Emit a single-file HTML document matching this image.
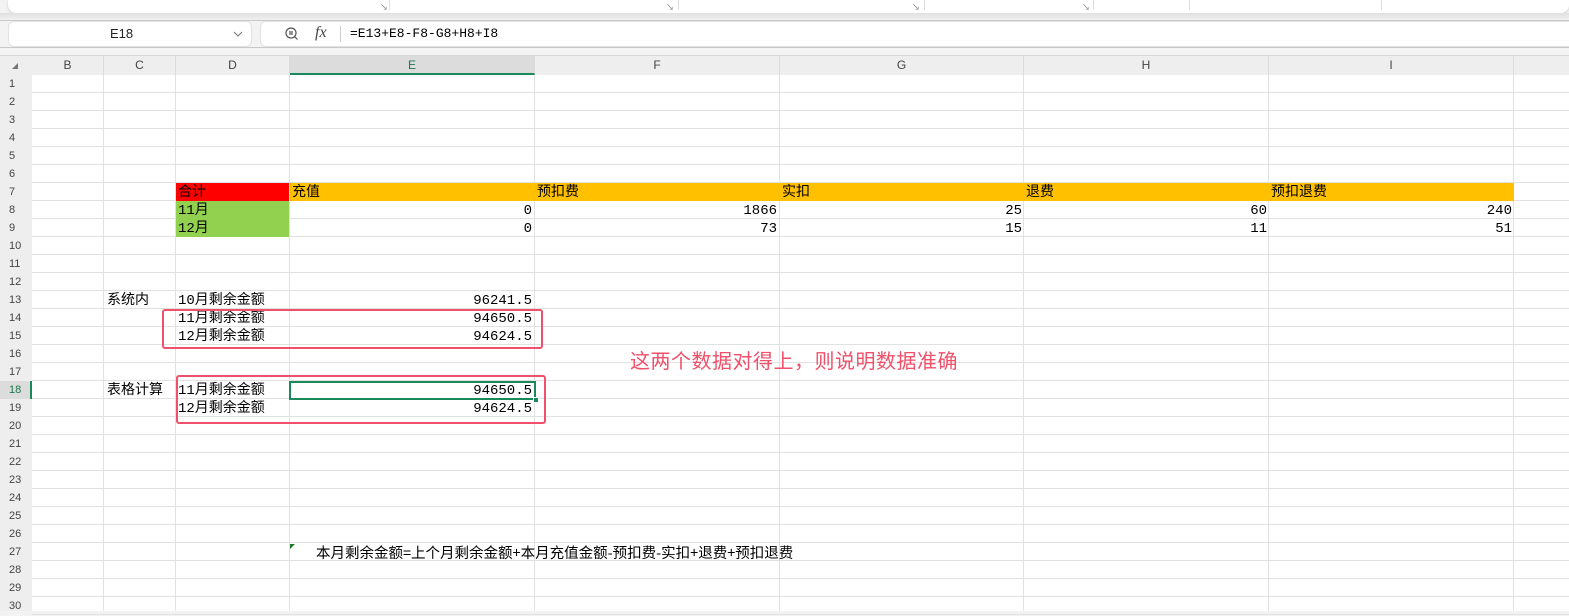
<!DOCTYPE html>
<html><head><meta charset="utf-8"><style>
*{margin:0;padding:0;box-sizing:border-box}
body{width:1569px;height:611px;overflow:hidden;background:#f3f3f3;font-family:"Liberation Sans","Noto Sans CJK SC",sans-serif;position:relative}
.a{position:absolute}
.t{font-family:"Liberation Mono","Noto Sans CJK SC",monospace;font-size:14px;color:#000;line-height:18px;white-space:nowrap}
.hl{position:absolute;left:32px;width:1537px;height:1px;background:#e1e1e1}
.vl{position:absolute;top:75px;height:536px;width:1px;background:#e1e1e1}
.ch{position:absolute;top:56px;height:19px;font-size:12px;color:#444;text-align:center;line-height:19px;border-right:1px solid #dcdcdc}
.rn{position:absolute;left:0;width:32px;height:18px;font-size:11px;color:#444;line-height:19px;padding-left:9px}
</style></head><body>
<div class="a" style="left:8px;top:0;width:1561px;height:13px;background:#fff;border-radius:0 0 8px 8px;box-shadow:0 1px 2px #ccc"></div>
<div class="a" style="left:380px;top:2px;font-size:8px;color:#777">↘</div>
<div class="a" style="left:389px;top:0;width:1px;height:10px;background:#ddd"></div>
<div class="a" style="left:666px;top:2px;font-size:8px;color:#777">↘</div>
<div class="a" style="left:678px;top:0;width:1px;height:10px;background:#ddd"></div>
<div class="a" style="left:912px;top:2px;font-size:8px;color:#777">↘</div>
<div class="a" style="left:924px;top:0;width:1px;height:10px;background:#ddd"></div>
<div class="a" style="left:1082px;top:2px;font-size:8px;color:#777">↘</div>
<div class="a" style="left:1093px;top:0;width:1px;height:10px;background:#ddd"></div>
<div class="a" style="left:1189px;top:0;width:1px;height:10px;background:#ddd"></div>
<div class="a" style="left:1381px;top:0;width:1px;height:10px;background:#ddd"></div>
<div class="a" style="left:0;top:13px;width:1569px;height:8px;background:linear-gradient(#e0e0e0,#f3f3f3)"></div>
<div class="a" style="left:0;top:20px;width:1569px;height:1px;background:#c8c8c8"></div>
<div class="a" style="left:8px;top:21px;width:244px;height:26px;background:#fff;border-radius:6px;border:1px solid #e2e2e2"></div>
<div class="a" style="left:110px;top:26px;font-size:13px;color:#222">E18</div>
<svg class="a" style="left:233px;top:30px" width="10" height="8"><path d="M1 2l4 4 4-4" stroke="#777" fill="none"/></svg>
<div class="a" style="left:260px;top:21px;width:1320px;height:26px;background:#fff;border-radius:6px;border:1px solid #e2e2e2"></div>
<svg class="a" style="left:284px;top:26px" width="16" height="16"><circle cx="7" cy="7" r="5" stroke="#555" fill="none" stroke-width="1.2"/><path d="M5 6h4M5 8h4M10.5 10.5l3 3" stroke="#555" stroke-width="1.2"/></svg>
<div class="a" style="left:315px;top:24px;font-family:'Liberation Serif',serif;font-style:italic;font-size:16px;color:#444">fx</div>
<div class="a" style="left:340px;top:26px;width:1px;height:16px;background:#ccc"></div>
<div class="a t" style="left:350px;top:25px;font-size:13px">=E13+E8-F8-G8+H8+I8</div>
<div class="a" style="left:0;top:47px;width:1569px;height:1px;background:#c8c8c8"></div>
<div class="a" style="left:0;top:48px;width:1569px;height:8px;background:#f3f3f3"></div>
<div class="a" style="left:0;top:55px;width:1569px;height:20px;background:#eeeeee;border-top:1px solid #d8d8d8"></div>
<div class="a" style="left:0;top:75px;width:32px;height:536px;background:#eeeeee"></div>
<div class="a" style="left:32px;top:75px;width:1537px;height:536px;background:#fff"></div>
<svg class="a" style="left:11px;top:62px" width="8" height="8"><path d="M7 1v6H1z" fill="#777"/></svg>
<div class="ch" style="left:32px;width:72px">B</div>
<div class="ch" style="left:104px;width:72px">C</div>
<div class="ch" style="left:176px;width:114px">D</div>
<div class="ch" style="left:290px;width:245px;background:#dcdcdc;color:#1a7a4a;border-bottom:2px solid #1a8a5a">E</div>
<div class="ch" style="left:535px;width:245px">F</div>
<div class="ch" style="left:780px;width:244px">G</div>
<div class="ch" style="left:1024px;width:245px">H</div>
<div class="ch" style="left:1269px;width:245px">I</div>
<div class="vl" style="left:103px"></div><div class="vl" style="left:175px"></div><div class="vl" style="left:289px"></div><div class="vl" style="left:534px"></div><div class="vl" style="left:779px"></div><div class="vl" style="left:1023px"></div><div class="vl" style="left:1268px"></div><div class="vl" style="left:1513px"></div>
<div id="rows"></div>
<script>
var h='';for(var i=1;i<=30;i++){var y=75+(i-1)*18;h+='<div class="hl" style="top:'+(y+17)+'px"></div><div class="rn" style="top:'+y+'px;'+(i==18?'background:#dcdcdc;color:#1a7a4a;border-right:2px solid #1a8a5a':'')+'">'+i+'</div>';}
document.getElementById('rows').innerHTML=h;
</script>
<div class="a" style="left:176px;top:183px;width:113px;height:18px;background:#ff0000"></div>
<div class="a" style="left:290px;top:183px;width:1224px;height:18px;background:#ffc000"></div>
<div class="a" style="left:176px;top:201px;width:113px;height:36px;background:#92d050"></div>
<div class="a t" style="left:178px;top:184px">合计</div>
<div class="a t" style="left:292px;top:184px">充值</div>
<div class="a t" style="left:537px;top:184px">预扣费</div>
<div class="a t" style="left:782px;top:184px">实扣</div>
<div class="a t" style="left:1026px;top:184px">退费</div>
<div class="a t" style="left:1271px;top:184px">预扣退费</div>
<div class="a t" style="left:178px;top:202px">11月</div>
<div class="a t" style="left:178px;top:220px">12月</div>
<div class="a t" style="right:1037px;top:202px">0</div><div class="a t" style="right:792px;top:202px">1866</div><div class="a t" style="right:547px;top:202px">25</div><div class="a t" style="right:302px;top:202px">60</div><div class="a t" style="right:57px;top:202px">240</div>
<div class="a t" style="right:1037px;top:220px">0</div><div class="a t" style="right:792px;top:220px">73</div><div class="a t" style="right:547px;top:220px">15</div><div class="a t" style="right:302px;top:220px">11</div><div class="a t" style="right:57px;top:220px">51</div>
<div class="a t" style="left:107px;top:292px">系统内</div>
<div class="a t" style="left:178px;top:292px">10月剩余金额</div>
<div class="a t" style="left:178px;top:310px">11月剩余金额</div>
<div class="a t" style="left:178px;top:328px">12月剩余金额</div>
<div class="a t" style="right:1037px;top:292px">96241.5</div>
<div class="a t" style="right:1037px;top:310px">94650.5</div>
<div class="a t" style="right:1037px;top:328px">94624.5</div>
<div class="a t" style="left:107px;top:382px">表格计算</div>
<div class="a t" style="left:178px;top:382px">11月剩余金额</div>
<div class="a t" style="left:178px;top:400px">12月剩余金额</div>
<div class="a t" style="right:1037px;top:382px">94650.5</div>
<div class="a t" style="right:1037px;top:400px">94624.5</div>
<div class="a" style="left:162px;top:309px;width:381px;height:40px;border:2px solid #f0506a;border-radius:3px"></div>
<div class="a" style="left:176px;top:375px;width:370px;height:49px;border:2px solid #f0506a;border-radius:3px"></div>
<div class="a" style="left:289px;top:381px;width:247px;height:19px;border:2px solid #1a8a5a"></div>
<div class="a" style="left:533px;top:397px;width:6px;height:6px;background:#1a8a5a;border:1px solid #fff"></div>
<div class="a" style="left:630px;top:346px;font-size:20px;color:#f0506a;font-family:'Noto Sans CJK SC',sans-serif;line-height:28px;letter-spacing:0.5px">这两个数据对得上，则说明数据准确</div>
<svg class="a" style="left:290px;top:544px" width="6" height="6"><path d="M0 0h5L0 5z" fill="#1a7a2a"/></svg>
<div class="a t" style="left:316px;top:544px;font-family:'Noto Sans CJK SC',sans-serif;font-size:14.5px">本月剩余金额=上个月剩余金额+本月充值金额-预扣费-实扣+退费+预扣退费</div>
</body></html>
